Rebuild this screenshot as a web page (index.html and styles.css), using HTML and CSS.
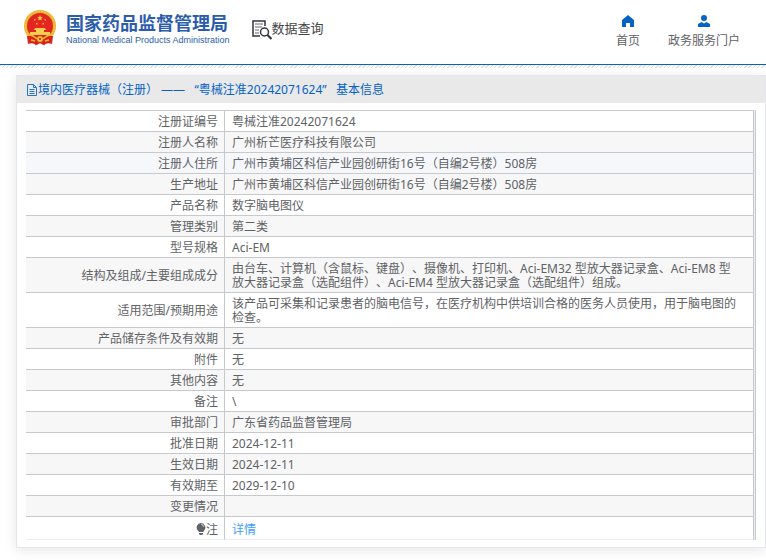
FILE: index.html
```
<!DOCTYPE html>
<html lang="zh-CN">
<head>
<meta charset="utf-8">
<meta name="viewport" content="width=device-width, initial-scale=1">
<title>数据查询 - 国家药品监督管理局</title>
<link rel="stylesheet" href="styles.css">
</head>
<body>
<header class="site-header">
  <a class="brand" href="#">
    <svg class="emblem" viewBox="0 0 32 36" aria-hidden="true">
      <path d="M5 26L4 33Q9 31 12 35L16 33L20 35Q23 31 28 33L27 26Z" fill="#dc1f1b"/>
      <circle cx="16" cy="16" r="16" fill="#e9b32b"/>
      <circle cx="16" cy="16" r="14.500" fill="none" stroke="#f5cf55" stroke-dasharray="2 1"/>
      <circle cx="16" cy="16" r="13" fill="#e32620"/>
      <path d="M16 5l.8 1.900 2 .200-1.500 1.300.4 2-1.700-1-1.700 1 .4-2-1.500-1.300 2-.200z" fill="#f8cb45"/>
      <path d="M10 9h1.500v1.500H10zM20.500 9H22v1.500h-1.500zM12 13h1.500v1.500H12zM18.500 13H20v1.500h-1.500z" fill="#f0b83a"/>
      <path d="M11 18h10l1 2H10zM12 20h8v2h-8zM6 22h20v3H6z" fill="#f6cf50"/>
      <path d="M3 26h26l-1 8q-5-2-8 1l-4-2-4 2q-3-3-8-1z" fill="#d9241d"/>
      <path d="M3 24q6 1 10 5M29 24q-6 1-10 5M7 30l4 1M25 30l-4 1" fill="none" stroke="#efb832" stroke-width="1.500"/>
      <circle cx="16" cy="29" r="3" fill="#f0bd35"/>
      <circle cx="16" cy="29" r="1" fill="#d9241d"/>
    </svg>
    <span class="brand-text">
      <span class="brand-cn">国家药品监督管理局</span>
      <span class="brand-en" lang="en">National Medical Products Administration</span>
    </span>
  </a>
  <a class="query" href="#">
    <svg class="query-icon" viewBox="0 0 20 20" fill="none" stroke="#34343f" aria-hidden="true">
      <path d="M13 6V1H1v15h7" stroke-width="1.500"/>
      <path d="M3 4h8M3 7h7M3 10h4M3 13h4" stroke="#666671"/>
      <circle cx="12.500" cy="12" r="4" stroke-width="1.500"/>
      <path d="M15.500 15l4 4" stroke-width="2.200"/>
    </svg>
    <span>数据查询</span>
  </a>
  <nav class="nav">
    <a href="#">
      <svg viewBox="0 0 12 12" fill="#0463c6" aria-hidden="true"><path d="M6 0l6 5v7H8V8H4v4H0V5z"/></svg>
      <span>首页</span>
    </a>
    <a href="#">
      <svg viewBox="0 0 12 12" fill="#0463c6" aria-hidden="true"><circle cx="6" cy="3" r="3"/><path d="M0 12V9l3.500-2L6 8.500 8.500 7 12 9v3z"/></svg>
      <span>政务服务门户</span>
    </a>
  </nav>
</header>
<main class="page">
  <section class="panel">
    <h1 class="panel-title">
      <svg viewBox="0 0 12 12" fill="none" stroke="#2872c8" aria-hidden="true"><path d="M1.500.500h6l3 3v8h-9zM7.500.500v3h3M3.500 5.500h5M3.500 7.500h5M3.500 9.500h5"/></svg>
      <span>境内医疗器械（注册） ——&nbsp;&nbsp; “粤械注准20242071624”&nbsp;&nbsp; 基本信息</span>
    </h1>
    <div class="panel-body">
      <div class="table-frame">
        <table class="info">
          <tbody>
            <tr><th scope="row">注册证编号</th><td>粤械注准20242071624</td></tr>
            <tr><th scope="row">注册人名称</th><td>广州析芒医疗科技有限公司</td></tr>
            <tr class="active"><th scope="row">注册人住所</th><td>广州市黄埔区科信产业园创研街16号（自编2号楼）508房</td></tr>
            <tr><th scope="row">生产地址</th><td>广州市黄埔区科信产业园创研街16号（自编2号楼）508房</td></tr>
            <tr><th scope="row">产品名称</th><td>数字脑电图仪</td></tr>
            <tr><th scope="row">管理类别</th><td>第二类</td></tr>
            <tr><th scope="row">型号规格</th><td>Aci-EM</td></tr>
            <tr><th scope="row">结构及组成/主要组成成分</th><td>由台车、计算机（含鼠标、键盘）、摄像机、打印机、Aci-EM32 型放大器记录盒、Aci-EM8 型放大器记录盒（选配组件）、Aci-EM4 型放大器记录盒（选配组件）组成。</td></tr>
            <tr><th scope="row">适用范围/预期用途</th><td>该产品可采集和记录患者的脑电信号，在医疗机构中供培训合格的医务人员使用，用于脑电图的检查。</td></tr>
            <tr><th scope="row">产品储存条件及有效期</th><td>无</td></tr>
            <tr><th scope="row">附件</th><td>无</td></tr>
            <tr><th scope="row">其他内容</th><td>无</td></tr>
            <tr><th scope="row">备注</th><td>\</td></tr>
            <tr><th scope="row">审批部门</th><td>广东省药品监督管理局</td></tr>
            <tr><th scope="row">批准日期</th><td>2024-12-11</td></tr>
            <tr><th scope="row">生效日期</th><td>2024-12-11</td></tr>
            <tr><th scope="row">有效期至</th><td>2029-12-10</td></tr>
            <tr><th scope="row">变更情况</th><td></td></tr>
            <tr class="note"><th scope="row"><svg viewBox="0 0 10 12" fill="#606266" aria-hidden="true"><path d="M5 0a4.500 4.500 0 0 1 3 7.700L7 9H3L2 7.700A4.500 4.500 0 0 1 5 0zM3 10h4v1L6 12H4L3 11z"/><path d="M5.500 1.500q2 .300 2.300 2.300" fill="none" stroke="#fff" stroke-width=".8"/></svg>注</th><td><a href="#">详情</a></td></tr>
          </tbody>
        </table>
      </div>
    </div>
  </section>
</main>
</body>
</html>
```
FILE: styles.css
```
* {
  box-sizing: border-box;
}

body {
  margin: 0;
  background: #fff;
  color: #606266;
  font: 12px/14px "Noto Sans", "Noto Sans CJK SC", sans-serif;
  text-spacing-trim: space-all;
}

a {
  color: inherit;
  text-decoration: none;
}

.site-header {
  display: flex;
  align-items: flex-start;
  padding: 10px 26px 15px 24px;
  border-bottom: 1px solid #0463c6;
}

.brand {
  display: flex;
  gap: 10px;
  color: #2c5dab;
}

.emblem {
  width: 32px;
  height: 36px;
}

.brand-text {
  display: flex;
  flex-direction: column;
  padding-top: 2px;
  white-space: nowrap;
}

.brand-cn {
  font-size: 18px;
  font-weight: 700;
  line-height: 22px;
}

.brand-en {
  font: 9px/12px "Liberation Sans", sans-serif;
}

.query {
  display: flex;
  margin: 10px 0 0 22px;
  color: #444;
  font-size: 13px;
  line-height: 16px;
}

.query-icon {
  width: 20px;
  height: 20px;
}

.nav {
  display: flex;
  gap: 28px;
  margin-left: auto;
  padding-top: 5px;
}

.nav a {
  display: flex;
  flex-direction: column;
  align-items: center;
  gap: 6px;
  line-height: 16px;
}

.nav svg {
  width: 12px;
  height: 12px;
}

.page {
  padding: 10px 0 12px 16px;
  background: repeating-linear-gradient(135deg, #e0e0e0 0 1px, #fff 1px 3px) top / 100% 3px no-repeat;
}

.panel {
  border: 1px solid #e4e7ed;
  background: #fff;
  box-shadow: 0 2px 12px rgba(0, 0, 0, 0.1);
}

.panel-title {
  display: flex;
  align-items: center;
  height: 27px;
  margin: 0;
  padding: 0 9px;
  background: #e9e9e9;
  color: #0463c6;
  font-size: 12px;
  font-weight: 400;
}

.panel-title svg {
  width: 12px;
  height: 12px;
}

.panel-body {
  padding: 7px 9px;
}

.table-frame {
  padding-right: 1px;
  border-right: 1px solid #c8c9cc;
  background: #ebeef5;
}

.info {
  width: 100%;
  border-top: 1px solid #c8c9cc;
  border-right: 1px solid #c8c9cc;
  border-spacing: 0;
  background: #fff;
}

.info th,
.info td {
  padding: 4px 6px 2px;
  border-bottom: 1px solid #c8c9cc;
  font-weight: 400;
}

.info td {
  padding-right: 12px;
  padding-left: 7px;
}

.info th {
  width: 199px;
  border-right: 1px solid #c8c9cc;
  text-align: right;
}

.info tr:nth-child(even) {
  background: #f7f7f7;
}

.info .active {
  background: #f5f7fa;
}

.info td:empty::before {
  content: "\00a0";
}

.info .note th,
.info .note td {
  padding-top: 6px;
  border-bottom-color: #ebeef5;
}

.note svg {
  width: 10px;
  height: 12px;
  vertical-align: -1px;
}

.note a {
  color: #409eff;
}
```
